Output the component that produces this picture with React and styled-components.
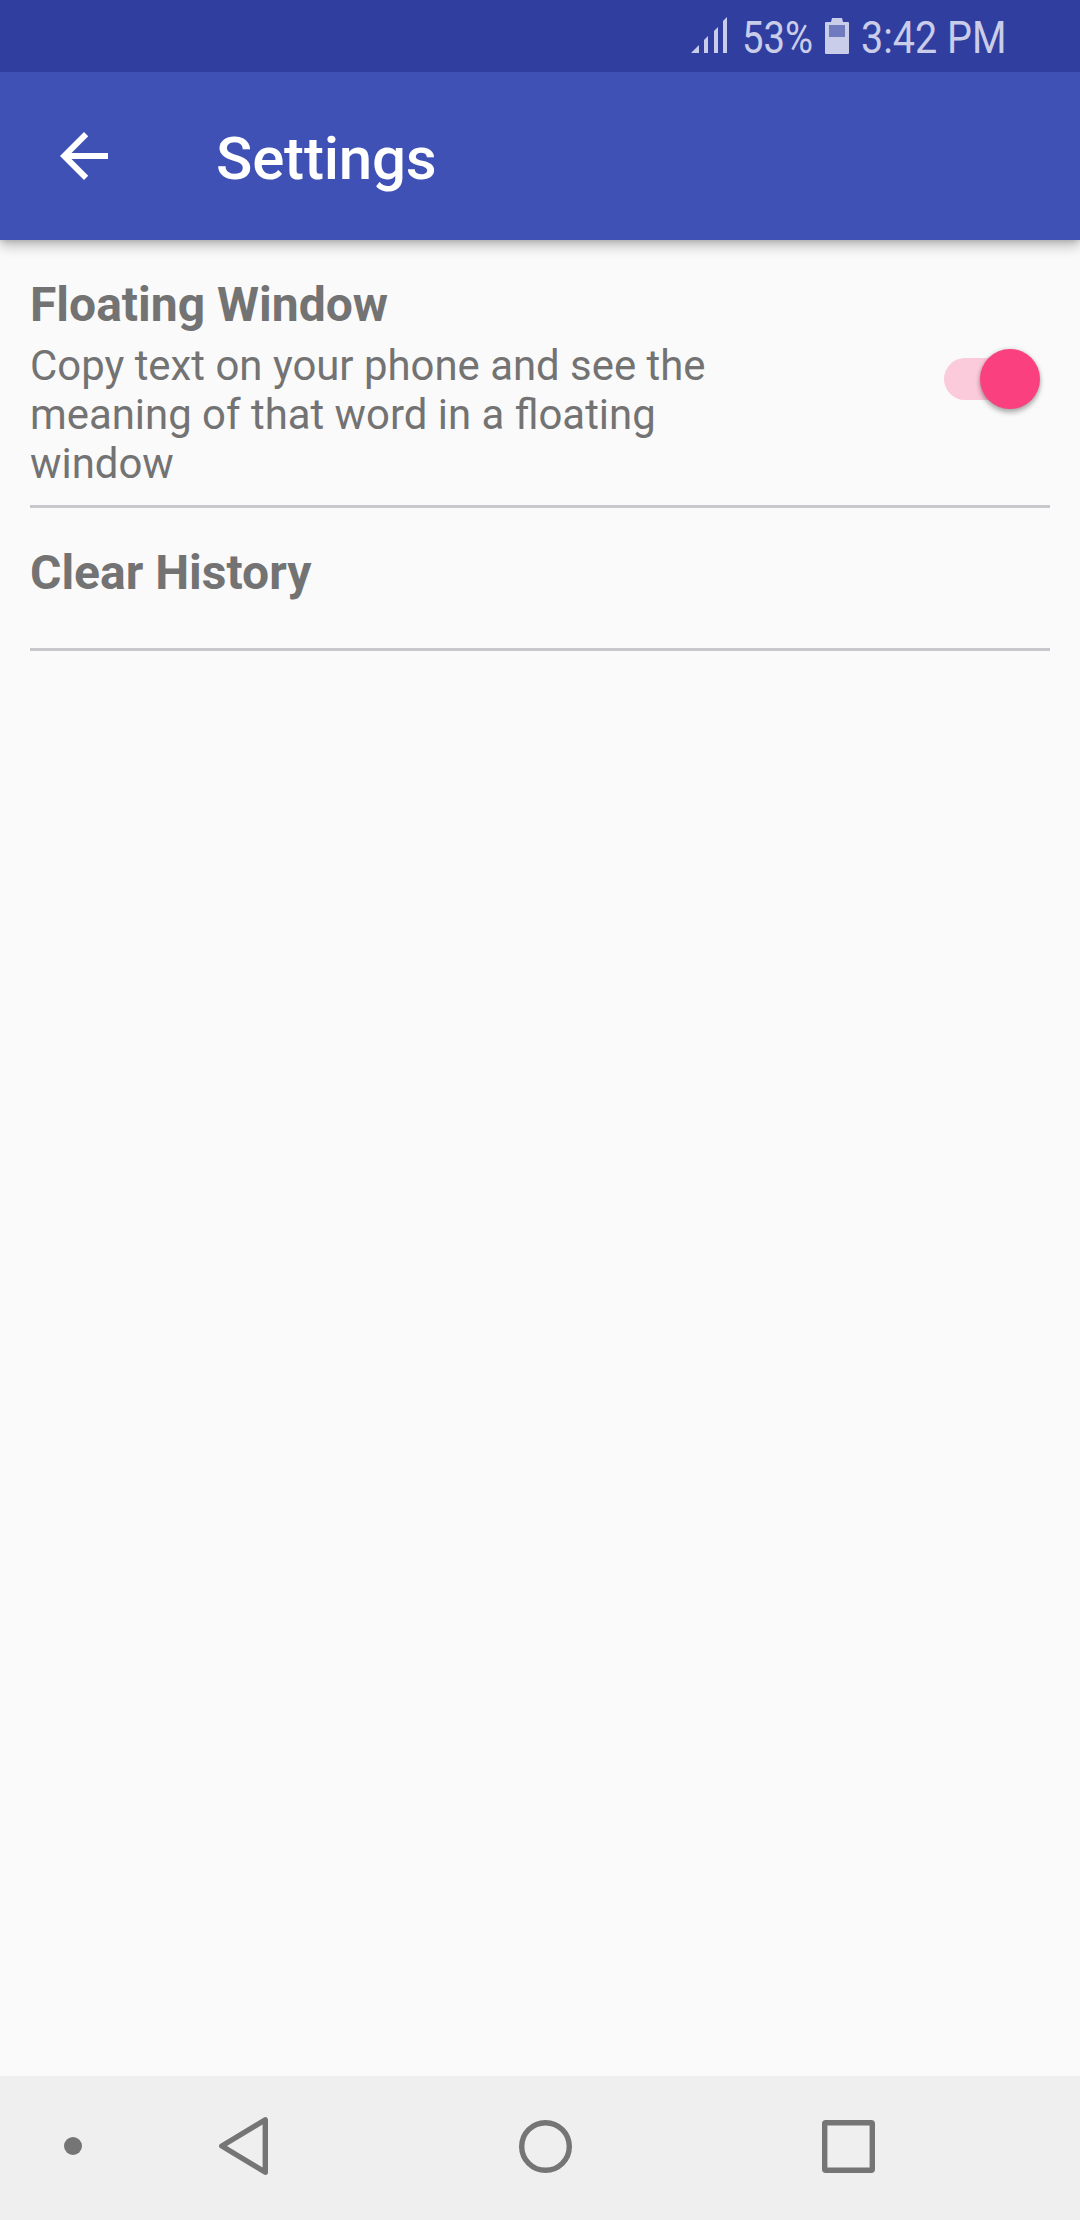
import React, { useState } from "react";
import styled, { createGlobalStyle } from "styled-components";

const GlobalStyle = createGlobalStyle`
  *, *::before, *::after { box-sizing: border-box; }
  body {
    margin: 0;
    background: #fafafa;
    font-family: Roboto, "Noto Sans", sans-serif;
  }
  svg { display: block; flex: none; }
`;

const Screen = styled.div`
  width: 1080px;
  height: 2220px;
  display: flex;
  flex-direction: column;
  background: #fafafa;
`;

const StatusBar = styled.header`
  position: relative;
  z-index: 1;
  flex: none;
  height: 72px;
  padding: 0 75px 0 0;
  display: flex;
  justify-content: flex-end;
  align-items: flex-start;
  background: #303f9f;
  color: #cacde9;
`;

const StatusSlot = styled.div`
  width: ${(p) => p.$width}px;
  height: 72px;
  flex: none;
`;

const StatusText = styled.span`
  display: block;
  width: max-content;
  padding-top: 11px;
  font-size: 45px;
  line-height: 53px;
  white-space: nowrap;
  transform: scaleX(${(p) => p.$squeeze});
  transform-origin: left center;
`;

const AppBar = styled.div`
  flex: none;
  height: 168px;
  display: flex;
  align-items: center;
  padding-left: 48px;
  background: #3f51b5;
  color: #fff;
  box-shadow: 0 6px 12px rgba(0, 0, 0, 0.24), 0 1px 6px rgba(0, 0, 0, 0.16);
`;

const BackButton = styled.button`
  width: 168px;
  padding: 0;
  border: 0;
  background: none;
  color: inherit;
`;

const Title = styled.h1`
  margin: 0;
  padding-top: 5px;
  font-size: 60px;
  line-height: 70px;
  font-weight: 500;
  letter-spacing: -0.18px;
`;

const SettingsList = styled.main`
  flex: 1;
  padding: 0 30px;
`;

const SettingRow = styled.section`
  display: flex;
  justify-content: space-between;
  height: ${(p) => p.$height}px;
  padding-top: 37px;
  border-bottom: 3px solid #c7c7cc;
  color: #737373;
`;

const SettingText = styled.div`
  width: 700px;
`;

const SettingName = styled.h2`
  margin: 0 0 8px;
  font-size: 48px;
  line-height: 56px;
  font-weight: 700;
`;

const SettingNote = styled.p`
  margin: 0;
  font-size: 41.9px;
  line-height: 49px;
`;

const SwitchTrack = styled.button`
  width: 86px;
  height: 42px;
  margin: 81px 20px 0 0;
  padding: 0;
  border: 0;
  border-radius: 21px;
  display: flex;
  align-items: center;
  background: ${(p) => (p.$on ? "#fbcadb" : "#c4c4c4")};
`;

const SwitchThumb = styled.span`
  flex: none;
  width: 60px;
  height: 60px;
  margin-left: ${(p) => (p.$on ? 35.5 : -9)}px;
  border-radius: 50%;
  background: ${(p) => (p.$on ? "#fb407f" : "#f1f1f1")};
  box-shadow: 0 4px 5px rgba(0, 0, 0, 0.26), 0 0 4px rgba(0, 0, 0, 0.18);
`;

const NavBar = styled.nav`
  flex: none;
  height: 144px;
  display: flex;
  align-items: center;
  padding: 0 0 4px 43px;
  background: #efefef;
  color: #757575;
`;

const NavButton = styled.button`
  width: 60px;
  height: 60px;
  margin-right: ${(p) => p.$gap || 0}px;
  padding: 0;
  border: 0;
  background: none;
  color: inherit;
`;

const NavIcon = ({ children }) => (
  <svg width="60" height="60" viewBox="0 0 60 60" fill="none" stroke="currentColor" strokeWidth="5.4" strokeLinejoin="round">
    {children}
  </svg>
);

export default function App() {
  const [floating, setFloating] = useState(true);

  return (
    <Screen>
      <GlobalStyle />
      <StatusBar>
        <StatusSlot $width={51}>
          <svg width="40" height="72" viewBox="0 0 40 72" fill="currentColor">
            <path d="M0 53L8 45V53ZM13 53V40L17 36V53ZM23 53V31L27 27V53ZM32 53V21L36 17V53Z" />
          </svg>
        </StatusSlot>
        <StatusSlot $width={83}>
          <StatusText $squeeze={0.85}>53%</StatusText>
        </StatusSlot>
        <StatusSlot $width={36}>
          <svg width="24" height="72" viewBox="0 0 24 72">
            <path d="M7 18H17L18 22H23Q24 22 24 23V53Q24 54 23 54H1Q0 54 0 53V23Q0 22 1 22H6Z" fill="currentColor" />
            <path d="M4 25H20V37H4Z" fill="#707abf" />
          </svg>
        </StatusSlot>
        <StatusSlot $width={144}>
          <StatusText $squeeze={0.878}>3:42 PM</StatusText>
        </StatusSlot>
      </StatusBar>

      <AppBar>
        <BackButton aria-label="Back">
          <svg width="72" height="72" viewBox="0 0 24 24" fill="currentColor">
            <path d="M20 11H7.83l5.59-5.59L12 4l-8 8 8 8 1.41-1.41L7.83 13H20v-2z" />
          </svg>
        </BackButton>
        <Title>Settings</Title>
      </AppBar>

      <SettingsList>
        <SettingRow $height={268}>
          <SettingText>
            <SettingName>Floating Window</SettingName>
            <SettingNote>
              Copy text on your phone and see the meaning of that word in a floating window
            </SettingNote>
          </SettingText>
          <SwitchTrack
            role="switch"
            aria-checked={floating}
            $on={floating}
            onClick={() => setFloating(!floating)}
          >
            <SwitchThumb $on={floating} />
          </SwitchTrack>
        </SettingRow>
        <SettingRow $height={143}>
          <SettingName>Clear History</SettingName>
        </SettingRow>
      </SettingsList>

      <NavBar>
        <NavButton $gap={112} aria-label="Pin bar">
          <NavIcon>
            <circle cx="30" cy="30" r="9" fill="currentColor" stroke="none" />
          </NavIcon>
        </NavButton>
        <NavButton $gap={240} aria-label="Back">
          <NavIcon>
            <path d="M6.8 30L50.3 3.8V56.2Z" />
          </NavIcon>
        </NavButton>
        <NavButton $gap={243} aria-label="Home">
          <NavIcon>
            <circle cx="30.5" cy="30.5" r="23.8" />
          </NavIcon>
        </NavButton>
        <NavButton aria-label="Recents">
          <NavIcon>
            <rect x="6.7" y="6.7" width="47.6" height="47.6" rx="1" />
          </NavIcon>
        </NavButton>
      </NavBar>
    </Screen>
  );
}
